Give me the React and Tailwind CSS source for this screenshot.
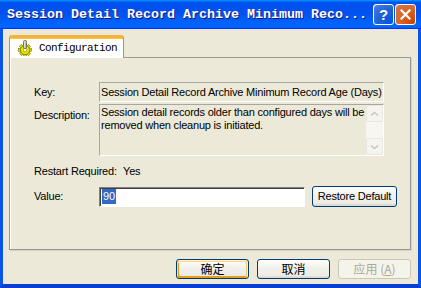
/* Session Detail Record Archive Minimum Record Age – XP style config dialog */

function GearIcon() {
  return (
    <svg width="16" height="16" viewBox="0 0 16 16" className="shrink-0">
      <g transform="translate(8 10)">
        {[0, 45, 90, 135, 180, 225, 270, 315].map((a) => (
          <rect key={a} x="-1.5" y="-6.5" width="3" height="3" fill="#d9d900" stroke="#7c7c00" strokeWidth="0.6" transform={`rotate(${a})`} />
        ))}
        <circle r="4.6" fill="#e6e600" stroke="#7c7c00" strokeWidth="0.8" />
        <circle r="1.8" fill="#fffbd0" stroke="#8a8a10" strokeWidth="0.6" />
      </g>
      <rect x="6.5" y="0.5" width="3" height="8" rx="1" fill="#b8b8b8" stroke="#5a5a5a" strokeWidth="0.7" />
      <rect x="7.3" y="1.5" width="0.8" height="6" fill="#f0f0f0" />
    </svg>
  )
}

function Chevron({ down }) {
  return (
    <svg width="9" height="6" viewBox="0 0 9 6">
      <path d={down ? "M1 1.5 L4.5 4.5 L8 1.5" : "M1 4.5 L4.5 1.5 L8 4.5"} fill="none" stroke="#c9c7ba" strokeWidth="1.6" />
    </svg>
  )
}

function XpButton({ children, className = "", hot = false, disabled = false }) {
  return (
    <div
      className={
        "flex shrink-0 items-center justify-center rounded-[3px] border " +
        (disabled
          ? "border-[#c9c7ba] bg-[#f5f4ea] text-[#aca899] "
          : "border-[#003c74] bg-[linear-gradient(180deg,#ffffff,#f2f1ec_40%,#ecebe6_86%,#d6d0c5)] ") +
        (hot ? "shadow-[inset_-1px_1px_#fff0cf,inset_1px_2px_#fdd889,inset_-2px_2px_#fbc761,inset_2px_-2px_#e5a01a] " : "") +
        className
      }
    >
      {children}
    </div>
  )
}

export default function App() {
  return (
    <div className="flex h-[288px] w-[421px] flex-col overflow-hidden bg-[#0831d9] font-['Liberation_Sans',Arial,sans-serif] text-[11px] tracking-[-0.2px] text-black">
      {/* title bar */}
      <div className="flex h-[29px] shrink-0 items-center bg-[linear-gradient(180deg,#0997ff,#0053ee_8%,#0050ee_40%,#0066ff_88%,#0066ff_93%,#005bff_95%,#0036ff_96%,#0036ff)] pl-[7px] pr-[5px]">
        <span className="flex-1 whitespace-nowrap font-['Liberation_Mono',monospace] text-[13.33px] font-bold tracking-normal text-white [text-shadow:1px_1px_#0a1883]">
          Session Detail Record Archive Minimum Reco...
        </span>
        <div className="flex gap-[1px]">
          <div className="flex h-[21px] w-[21px] items-center justify-center rounded-[3px] border border-white bg-[radial-gradient(circle_at_90%_90%,#0054e9_0%,#2263d5_55%,#4479e4_90%,#fff_100%)] font-bold text-[15px] leading-none text-white">
            ?
          </div>
          <div className="flex h-[21px] w-[21px] items-center justify-center rounded-[3px] border border-white bg-[radial-gradient(circle_at_90%_90%,#cc4600_0%,#dc6527_55%,#cd7546_90%,#fff_100%)]">
            <svg width="11" height="11" viewBox="0 0 11 11">
              <path d="M1.5 1.5 L9.5 9.5 M9.5 1.5 L1.5 9.5" stroke="#fff" strokeWidth="2.2" strokeLinecap="square" />
            </svg>
          </div>
        </div>
      </div>

      {/* frame + client area */}
      <div className="flex flex-1 flex-col border-x-[3px] border-b-[4px] border-x-[#0b55e6] border-b-[#0a3fd6] shadow-[inset_1px_0_#0831d9,inset_-1px_0_#00138c,inset_0_-1px_#00138c]">
        <div className="flex flex-1 flex-col bg-[#ece9d8]">
          {/* tab strip */}
          <div className="flex pl-[6px] pt-[6px]">
            <div className="relative z-10 -mb-px flex h-[23px] w-[115px] items-center gap-[6px] rounded-t-[3px] border-x border-t-[3px] border-x-[#919b9c] border-t-[#f4b23a] bg-white pl-[7px] shadow-[inset_0_1px_#ffc73c]">
              <GearIcon />
              <span className="font-['Liberation_Mono',monospace] text-[11px] tracking-[-0.6px]">Configuration</span>
            </div>
          </div>

          {/* tab panel */}
          <div className="ml-[6px] mr-[7px] h-[193px] border border-[#919b9c] bg-[#ece9d8] pl-[24px] pt-[24px] shadow-[inset_1px_0_#fff,1px_1px_#d6d3c4]">
            <div className="flex h-[20px] items-center">
              <span className="w-[65px] shrink-0">Key:</span>
              <div className="flex h-[20px] w-[285px] shrink-0 items-center whitespace-nowrap border border-[#a7a6a0] border-b-white border-r-white pl-[1px]">
                Session Detail Record Archive Minimum Record Age (Days)
              </div>
            </div>

            <div className="mt-[2px] flex">
              <span className="w-[65px] shrink-0 pt-[3px]">Description:</span>
              <div className="flex h-[52px] w-[285px] shrink-0 border border-[#a7a6a0] border-b-white border-r-white">
                <div className="flex-1 pl-[1px] pt-[1px] leading-[13px]">
                  Session detail records older than configured days will be removed when cleanup is initiated.
                </div>
                <div className="flex w-[17px] flex-col justify-between bg-[#f7f7f2]">
                  <div className="flex h-[17px] items-center justify-center rounded-[2px] border border-[#e8e7e0] bg-[#f5f4ef]">
                    <Chevron />
                  </div>
                  <div className="flex h-[17px] items-center justify-center rounded-[2px] border border-[#e8e7e0] bg-[#f5f4ef]">
                    <Chevron down />
                  </div>
                </div>
              </div>
            </div>

            <div className="mt-[8px] flex h-[14px] items-center">
              <span className="w-[89px] shrink-0">Restart Required:</span>
              <span>Yes</span>
            </div>

            <div className="mt-[8px] flex h-[21px] items-center">
              <span className="w-[65px] shrink-0">Value:</span>
              <div className="flex h-[20px] w-[206px] shrink-0 items-center border border-[#808080] border-b-white border-r-white bg-white pl-[2px] shadow-[inset_1px_1px_#404040]">
                <span className="bg-[#316ac5] px-[1px] leading-[15px] text-white">90</span>
              </div>
              <XpButton className="ml-[7px] h-[21px] w-[85px]">Restore Default</XpButton>
            </div>
          </div>

          {/* dialog buttons */}
          <div className="mt-[9px] flex justify-end gap-[8px] pr-[7px] font-['Noto_Sans_CJK_SC',sans-serif] text-[12px] tracking-normal">
            <XpButton hot className="h-[20px] w-[73px]">确定</XpButton>
            <XpButton className="h-[20px] w-[73px]">取消</XpButton>
            <XpButton disabled className="h-[20px] w-[73px]">
              应用 (<span className="underline">A</span>)
            </XpButton>
          </div>
        </div>
      </div>
    </div>
  )
}
